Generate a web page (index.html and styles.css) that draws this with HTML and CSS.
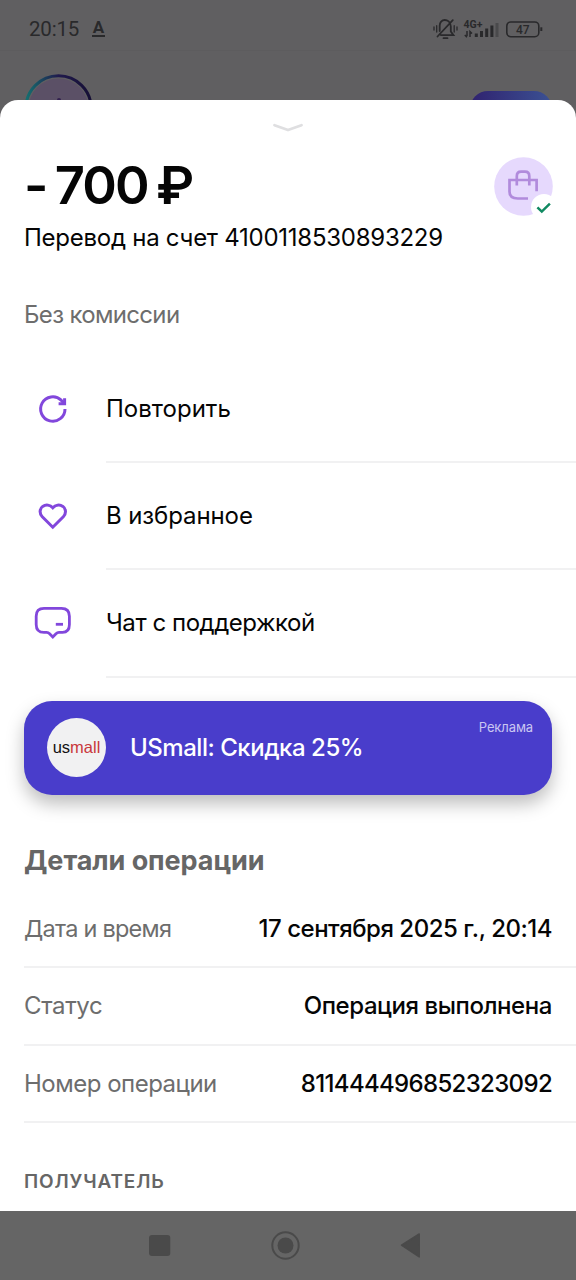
FILE: index.html
```html
<!DOCTYPE html>
<html lang="ru">
<head>
<meta charset="utf-8">
<title>Детали операции</title>
<link rel="stylesheet" href="styles.css">
</head>
<body>
<div class="screen">
  <header class="statusbar">
    <span class="clock">20:15</span>
    <span class="keyboard">A</span>
    <svg class="status-icons" width="112" height="24" viewBox="0 0 112 24" fill="none" stroke="#29292b">
      <g stroke-width="1.8" stroke-linecap="round">
        <path d="M8 18.2H20.5L17.8 14.5V9.5C17.8 4.5 14 3 11.8 3C8.8 3 6.7 5.2 6.7 8.5V14M4.5 19.5L19.8 3.2M10.5 21.2H14.5"/>
        <path d="M1 10V13M3.7 8.7V15M21.2 8.7V15M24 10V13" stroke-width="1.3"/>
      </g>
      <text class="net" x="30.5" y="10.5">4G+</text>
      <path d="M34 14V19M31.8 18L34 20.3M37 20V14.5L39 16.5" stroke-width="1.5"/>
      <path d="M43.3 20V16.5M48.5 20V14M53.7 20V11.5M58.9 20V8.5" stroke-width="3"/>
      <path d="M64 20V6" stroke-width="3" stroke="#4a4a4c"/>
      <rect x="73.8" y="5" width="32" height="14.7" rx="4" stroke-width="1.6"/>
      <path d="M108.3 10.3V14" stroke-width="2"/>
      <text class="charge" x="83" y="16.7">47</text>
    </svg>
  </header>
  <div class="backdrop">
    <svg class="avatar" width="72" height="29" viewBox="0 0 72 29">
      <defs><linearGradient id="ring" x1="0" y1="0" x2="1" y2="0"><stop offset="0" stop-color="#147070"/><stop offset=".5" stop-color="#201a4d"/><stop offset="1" stop-color="#160f35"/></linearGradient></defs>
      <circle cx="35.5" cy="36.5" r="32.7" fill="#605f61" stroke="url(#ring)" stroke-width="3"/>
      <circle cx="35.5" cy="36.5" r="30" fill="#5b5066"/>
      <circle cx="36" cy="28" r="2" fill="#32204f"/>
    </svg>
    <div class="pill"></div>
  </div>

  <main class="sheet">
    <svg class="grabber" width="32" height="10" viewBox="0 0 32 10" fill="none" stroke="#dfdfe1" stroke-width="2.8" stroke-linecap="round" stroke-linejoin="round"><path d="M2.5 2.2L16 7L29.5 2.2"/></svg>
    <section class="summary">
      <div class="summary-text">
        <h1 class="amount">- 700 ₽</h1>
        <p class="purpose">Перевод на счет 4100118530893229</p>
      </div>
      <svg class="category" width="62" height="62" viewBox="0 0 62 62" fill="none">
        <circle cx="29.5" cy="29.5" r="29.3" fill="#e6d9fd"/>
        <circle cx="50" cy="50" r="13" fill="#fff"/>
        <path d="M42.6 34.3V23H15.5V34.5Q15.5 41.5 23.8 41.5H34M22.8 28.5V19.2Q22.8 14.7 27.1 14.7H31Q35.3 14.7 35.3 19.2V28.5" stroke="#b18bdc" stroke-width="2.7"/>
        <path d="M43.4 50.3L47.8 54.6L55.9 46.7" stroke="#118a62" stroke-width="2.5"/>
      </svg>
    </section>
    <p class="fee">Без комиссии</p>

    <nav class="actions">
      <a class="action">
        <svg class="action-icon" width="58" height="40" viewBox="0 0 58 40" fill="none" stroke="#8247dc" stroke-width="3"><path d="M41 20A12.2 12.2 0 1 1 37.2 11.2L39.8 14"/><path d="M40.6 9.2V14.8H34.6"/></svg>
        <span class="action-label repeat">Повторить</span>
      </a>
      <a class="action favorite-action">
        <svg class="action-icon" width="58" height="40" viewBox="0 0 58 40" fill="none" stroke="#8247dc" stroke-width="3"><path d="M28.8 31.2L18.3 20.8C15 17.2 15.7 12.6 18.7 10.4C22 8.2 26.2 8.9 28.8 11.8C31.4 8.9 35.6 8.2 38.9 10.4C41.9 12.6 42.6 17.2 39.3 20.8Z"/></svg>
        <span class="action-label favorite">В избранное</span>
      </a>
      <a class="action chat-action">
        <svg class="action-icon" width="58" height="40" viewBox="0 0 58 40" fill="none" stroke="#8247dc" stroke-width="2.8"><path d="M20 5.3H37.5Q45.4 5.3 45.4 13.2V21.5Q45.4 29.4 38.5 29.4H35Q33.2 29.4 32.2 30.6L28.8 34L25.4 30.6Q24.4 29.4 22.6 29.4H20Q12.2 29.4 12.2 21.5V13.2Q12.2 5.3 20 5.3Z"/><path d="M31.8 21.3H39"/></svg>
        <span class="action-label chat">Чат с поддержкой</span>
      </a>
    </nav>

    <section class="promo">
      <span class="brand">us<span class="brand-red">mall</span></span>
      <span class="promo-title">USmall: Скидка 25%</span>
      <span class="promo-tag">Реклама</span>
    </section>

    <section class="details">
      <h2 class="details-title">Детали операции</h2>
      <dl class="rows">
        <div class="row"><dt class="key date-key">Дата и время</dt><dd class="value date">17 сентября 2025 г., 20:14</dd></div>
        <div class="row"><dt class="key status-key">Статус</dt><dd class="value status">Операция выполнена</dd></div>
        <div class="row"><dt class="key number-key">Номер операции</dt><dd class="value number">811444496852323092</dd></div>
      </dl>
      <h3 class="recipient">ПОЛУЧАТЕЛЬ</h3>
    </section>
  </main>

  <footer class="navbar">
    <svg width="576" height="69" viewBox="0 0 576 69" fill="#4a4a4a">
      <rect x="149" y="24" width="21.3" height="21" rx="3"/>
      <circle cx="285.5" cy="34.5" r="13.2" fill="none" stroke="#4a4a4a" stroke-width="2"/>
      <circle cx="285.5" cy="34.5" r="8"/>
      <path d="M401.5 34.2L419.2 23V46Z" stroke="#4a4a4a" stroke-width="1.5" stroke-linejoin="round"/>
    </svg>
  </footer>
</div>
</body>
</html>
```
FILE: styles.css
```css
* { box-sizing: border-box; margin: 0; padding: 0; }
body { font-family: Inter, "Noto Sans", sans-serif; color: #050505; background: #605f61; }
.screen { width: 576px; height: 1280px; overflow: hidden; display: flex; flex-direction: column; background: #605f61; }

.statusbar { height: 51px; flex: none; display: flex; align-items: center; padding: 7px 31px 0 29px; border-bottom: 1px solid #5d5c5e; color: #29292b; font-family: Roboto, sans-serif; }
.clock { font-size: 20.5px; line-height: 24px; letter-spacing: -.2px; padding-top: 1px; }
.keyboard { margin-left: 13px; width: 13px; height: 17px; border-bottom: 2px solid #29292b; font-size: 17px; line-height: 14px; font-weight: 700; text-align: center; }
.status-icons { margin-left: auto; }
.net { font: 700 10.5px Roboto, sans-serif; fill: #29292b; stroke: none; }
.charge { font: 500 12px Roboto, sans-serif; fill: #29292b; stroke: none; }

.backdrop { height: 49px; flex: none; display: flex; justify-content: space-between; padding: 21px 24px 0 23px; }
.avatar { flex: none; }
.pill { width: 82px; height: 36px; margin-top: 19px; border-radius: 18px; background: linear-gradient(90deg, #30226f, #3b5193); }

.sheet { position: relative; height: 1111px; flex: none; overflow: hidden; background: #fff; border-radius: 18px 18px 0 0; display: flex; flex-direction: column; }
.grabber { margin: 23px 0 0 272px; flex: none; }
.summary { display: flex; justify-content: space-between; padding: 24px 20px 0 24px; height: 121px; flex: none; }
.amount { font-size: 52.5px; line-height: 56px; font-weight: 600; letter-spacing: -2px; word-spacing: -2.8px; white-space: nowrap; }
.purpose { margin-top: 10px; font-size: 24px; line-height: 30px; letter-spacing: -.26px; white-space: nowrap; }
.category { flex: none; }
.fee { margin: 46px 0 0 24px; font-size: 24px; line-height: 30px; letter-spacing: -.67px; color: #6d6d6d; white-space: nowrap; align-self: flex-start; }

.actions { margin-top: 25px; flex: none; }
.action { display: flex; height: 107.5px; padding: 34px 0 0 24px; background: linear-gradient(#f1f1f2, #f1f1f2) 106px 100% / 470px 2px no-repeat; }
.favorite-action, .chat-action { padding-top: 33px; }
.action-icon { flex: none; }
.action-label { margin: 5px 0 0 24px; font-size: 24px; line-height: 30px; white-space: nowrap; }
.favorite { letter-spacing: -.1px; }
.chat { letter-spacing: -.45px; }

.promo { margin: 23px 24px 0; height: 94px; flex: none; display: flex; align-items: center; padding: 0 19px 0 23px; background: #493dcb; border-radius: 28px; color: #fff; box-shadow: 0 9px 18px rgba(0, 0, 0, .26); }
.brand { width: 59px; height: 59px; flex: none; border-radius: 50%; background: #f1f1f2; color: #111; font: 16.5px/59px "Liberation Sans", Arial, sans-serif; text-align: center; }
.brand-red { color: #c9373b; }
.promo-title { margin-left: 24px; font-size: 24px; line-height: 30px; font-weight: 500; letter-spacing: -.47px; white-space: nowrap; }
.promo-tag { margin-left: auto; align-self: flex-start; margin-top: 17px; font-size: 13px; line-height: 18px; letter-spacing: -.1px; color: #cac6f2; }

.details { padding-left: 24px; margin-top: 48px; flex: none; }
.details-title { font-size: 27px; line-height: 36px; font-weight: 700; letter-spacing: -.07px; color: #666; white-space: nowrap; }
.rows { margin-top: 12px; }
.row { height: 77.5px; display: flex; justify-content: space-between; align-items: center; padding: 1px 24px 0 0; border-bottom: 2px solid #f1f1f2; font-size: 24px; line-height: 30px; white-space: nowrap; }
.key { color: #6d6d6d; }
.date-key { font-size: 23.5px; letter-spacing: -.75px; }
.status-key { letter-spacing: -.35px; }
.number-key { letter-spacing: -.5px; }
.value { font-weight: 500; }
.date { letter-spacing: -.48px; }
.status { letter-spacing: -.43px; }
.number { letter-spacing: -.67px; }
.recipient { margin-top: 47px; font-size: 19px; line-height: 24px; font-weight: 600; letter-spacing: .85px; color: #666; }

.navbar { height: 69px; flex: none; background: #656565; }
.navbar svg { display: block; }
```
